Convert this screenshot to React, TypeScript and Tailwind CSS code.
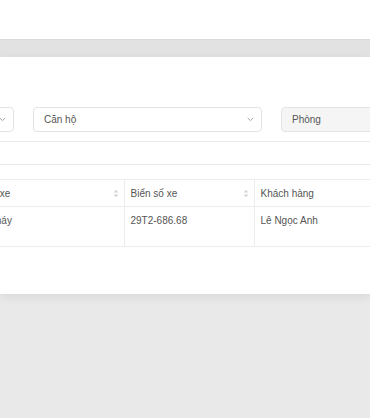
import React from 'react'

const font = { fontFamily: '"Liberation Sans", Arial, sans-serif' }

function Chevron() {
  return (
    <svg width="7" height="5" viewBox="0 0 7 5" className="shrink-0">
      <path d="M1 1.2 L3.5 3.6 L6 1.2" fill="none" stroke="#9a9a9a" strokeWidth="0.9" strokeLinecap="round" strokeLinejoin="round" />
    </svg>
  )
}

function SortIcon() {
  return (
    <svg width="6" height="9" viewBox="0 0 6 9" className="shrink-0">
      <path d="M3 0.8 L5.4 3.6 L0.6 3.6 Z" fill="#d4d4d4" />
      <path d="M3 8.2 L5.4 5.4 L0.6 5.4 Z" fill="#d4d4d4" />
    </svg>
  )
}

function Select({ label, disabled }: { label: string; disabled?: boolean }) {
  return (
    <div
      className={`h-[25px] rounded-[4px] border border-[#e3e3e3] flex items-center justify-between pl-[10px] pr-[7px] text-[10px] text-[#555] ${
        disabled ? 'bg-[#f5f5f5]' : 'bg-white'
      }`}
    >
      <span>{label}</span>
      {!disabled && <Chevron />}
    </div>
  )
}

const columns = [
  { label: 'Loại xe', width: 152 },
  { label: 'Biển số xe', width: 130 },
  { label: 'Khách hàng', width: 160 },
]

const rows = [['Xe máy', '29T2-686.68', 'Lê Ngọc Anh']]

export default function App() {
  return (
    <div className="w-[370px] h-[418px] overflow-hidden bg-[#e9e9e9] flex flex-col" style={font}>
      {/* top bar */}
      <div className="h-[39px] bg-white shrink-0" />
      <div className="h-[18px] bg-[#e2e2e2] border-t border-[#dadada] shrink-0" />

      {/* card */}
      <div className="h-[237px] bg-white shrink-0 shadow-[0_3px_10px_rgba(0,0,0,0.07)] relative z-10">
        <div className="ml-[-215px] w-[800px] pt-[50px]">
          <div className="grid grid-cols-[229px_229px_229px] gap-x-[19px]">
            <Select label="Tòa nhà" />
            <Select label="Căn hộ" />
            <Select label="Phòng" disabled />
          </div>
        </div>

        <div className="mt-[9px] h-[24px] border-t border-b border-[#e8e8e8]" />

        <div className="mt-[14px] ml-[-28px]">
          <table className="w-[442px] border-collapse text-[10px] text-[#555] table-fixed">
            <colgroup>
              {columns.map((c) => (
                <col key={c.label} style={{ width: c.width }} />
              ))}
            </colgroup>
            <thead>
              <tr className="border-t border-b border-[#ececec]">
                {columns.map((c, i) => (
                  <th
                    key={c.label}
                    className={`h-[27px] pl-[6px] pr-[5px] font-normal text-left ${i < columns.length - 1 ? 'border-r border-[#ececec]' : ''}`}
                  >
                    <div className="flex items-center justify-between">
                      <span>{c.label}</span>
                      {i < 2 && <SortIcon />}
                    </div>
                  </th>
                ))}
              </tr>
            </thead>
            <tbody>
              {rows.map((r, ri) => (
                <tr key={ri} className="border-b border-[#ececec]">
                  {r.map((cell, i) => (
                    <td
                      key={i}
                      className={`h-[40px] px-[6px] pt-[7px] align-top leading-[13px] ${i < r.length - 1 ? 'border-r border-[#ececec]' : ''}`}
                    >
                      {cell}
                    </td>
                  ))}
                </tr>
              ))}
            </tbody>
          </table>
        </div>
      </div>

      <div className="flex-1 bg-[#e9e9e9]" />
    </div>
  )
}
